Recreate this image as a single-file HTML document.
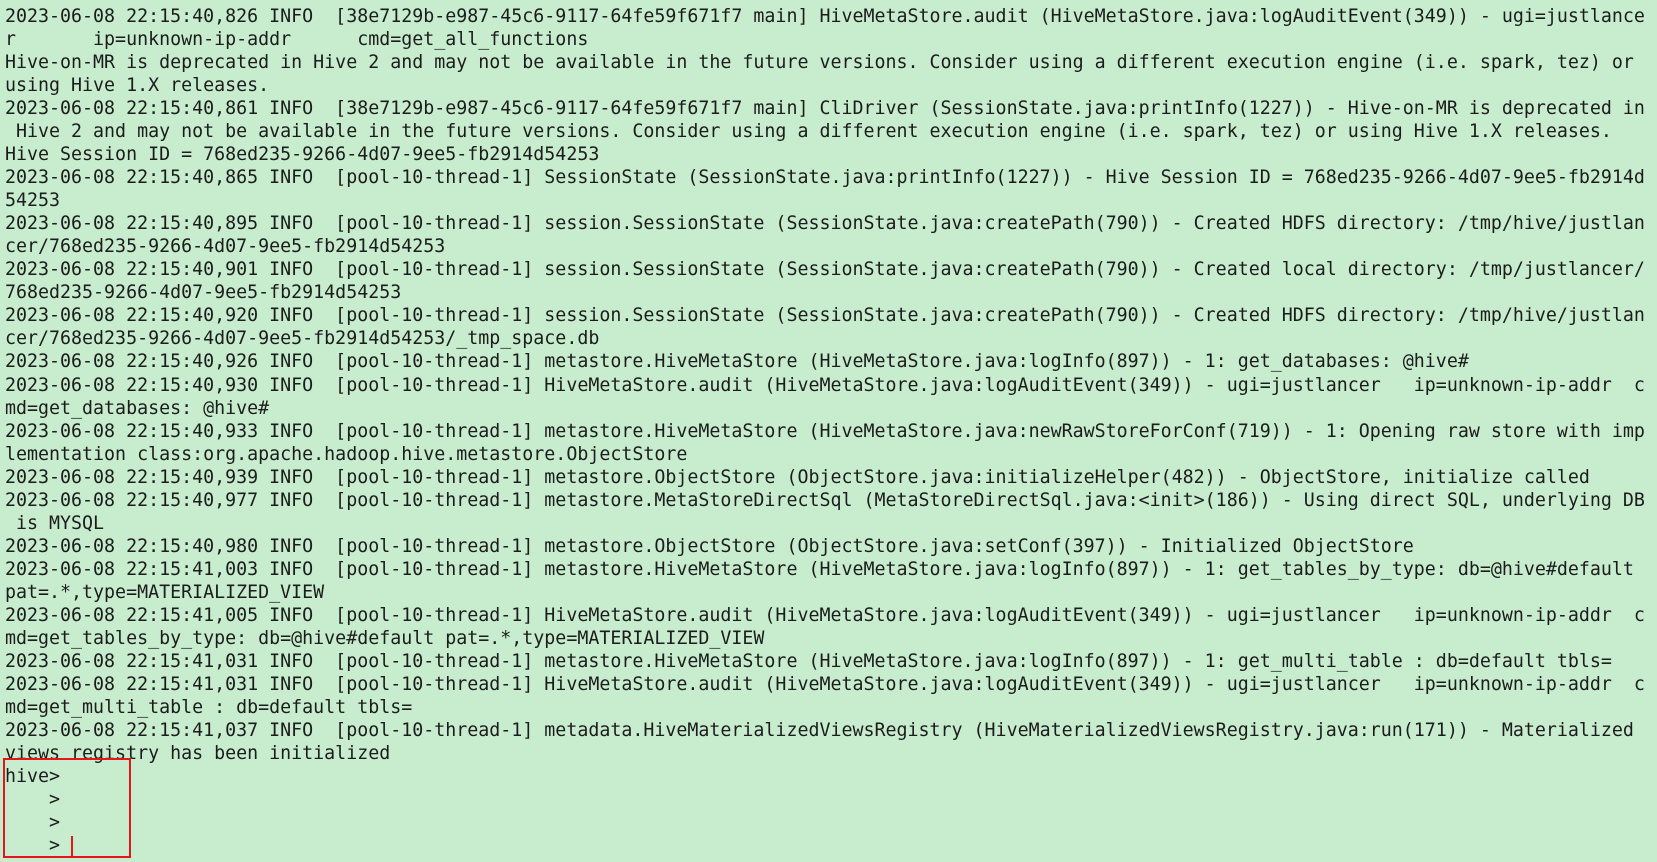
<!DOCTYPE html>
<html><head><meta charset="utf-8"><style>
html,body{margin:0;padding:0;background:#c7ecce;width:1657px;height:862px;overflow:hidden}
pre{margin:0;position:absolute;left:5px;top:5px;font-family:"DejaVu Sans Mono","Liberation Mono",monospace;font-size:18.3px;line-height:23.03px;color:#1c1c1c;white-space:pre}
.box{position:absolute;left:3px;top:758px;width:124px;height:96px;border:2px solid #e3161b}
.cur{position:absolute;left:71px;top:836px;width:2px;height:20px;background:#e3161b}
</style></head><body>
<pre>2023-06-08 22:15:40,826 INFO  [38e7129b-e987-45c6-9117-64fe59f671f7 main] HiveMetaStore.audit (HiveMetaStore.java:logAuditEvent(349)) - ugi=justlance
r       ip=unknown-ip-addr      cmd=get_all_functions
Hive-on-MR is deprecated in Hive 2 and may not be available in the future versions. Consider using a different execution engine (i.e. spark, tez) or
using Hive 1.X releases.
2023-06-08 22:15:40,861 INFO  [38e7129b-e987-45c6-9117-64fe59f671f7 main] CliDriver (SessionState.java:printInfo(1227)) - Hive-on-MR is deprecated in
 Hive 2 and may not be available in the future versions. Consider using a different execution engine (i.e. spark, tez) or using Hive 1.X releases.
Hive Session ID = 768ed235-9266-4d07-9ee5-fb2914d54253
2023-06-08 22:15:40,865 INFO  [pool-10-thread-1] SessionState (SessionState.java:printInfo(1227)) - Hive Session ID = 768ed235-9266-4d07-9ee5-fb2914d
54253
2023-06-08 22:15:40,895 INFO  [pool-10-thread-1] session.SessionState (SessionState.java:createPath(790)) - Created HDFS directory: /tmp/hive/justlan
cer/768ed235-9266-4d07-9ee5-fb2914d54253
2023-06-08 22:15:40,901 INFO  [pool-10-thread-1] session.SessionState (SessionState.java:createPath(790)) - Created local directory: /tmp/justlancer/
768ed235-9266-4d07-9ee5-fb2914d54253
2023-06-08 22:15:40,920 INFO  [pool-10-thread-1] session.SessionState (SessionState.java:createPath(790)) - Created HDFS directory: /tmp/hive/justlan
cer/768ed235-9266-4d07-9ee5-fb2914d54253/_tmp_space.db
2023-06-08 22:15:40,926 INFO  [pool-10-thread-1] metastore.HiveMetaStore (HiveMetaStore.java:logInfo(897)) - 1: get_databases: @hive#
2023-06-08 22:15:40,930 INFO  [pool-10-thread-1] HiveMetaStore.audit (HiveMetaStore.java:logAuditEvent(349)) - ugi=justlancer   ip=unknown-ip-addr  c
md=get_databases: @hive#
2023-06-08 22:15:40,933 INFO  [pool-10-thread-1] metastore.HiveMetaStore (HiveMetaStore.java:newRawStoreForConf(719)) - 1: Opening raw store with imp
lementation class:org.apache.hadoop.hive.metastore.ObjectStore
2023-06-08 22:15:40,939 INFO  [pool-10-thread-1] metastore.ObjectStore (ObjectStore.java:initializeHelper(482)) - ObjectStore, initialize called
2023-06-08 22:15:40,977 INFO  [pool-10-thread-1] metastore.MetaStoreDirectSql (MetaStoreDirectSql.java:&lt;init&gt;(186)) - Using direct SQL, underlying DB
 is MYSQL
2023-06-08 22:15:40,980 INFO  [pool-10-thread-1] metastore.ObjectStore (ObjectStore.java:setConf(397)) - Initialized ObjectStore
2023-06-08 22:15:41,003 INFO  [pool-10-thread-1] metastore.HiveMetaStore (HiveMetaStore.java:logInfo(897)) - 1: get_tables_by_type: db=@hive#default
pat=.*,type=MATERIALIZED_VIEW
2023-06-08 22:15:41,005 INFO  [pool-10-thread-1] HiveMetaStore.audit (HiveMetaStore.java:logAuditEvent(349)) - ugi=justlancer   ip=unknown-ip-addr  c
md=get_tables_by_type: db=@hive#default pat=.*,type=MATERIALIZED_VIEW
2023-06-08 22:15:41,031 INFO  [pool-10-thread-1] metastore.HiveMetaStore (HiveMetaStore.java:logInfo(897)) - 1: get_multi_table : db=default tbls=
2023-06-08 22:15:41,031 INFO  [pool-10-thread-1] HiveMetaStore.audit (HiveMetaStore.java:logAuditEvent(349)) - ugi=justlancer   ip=unknown-ip-addr  c
md=get_multi_table : db=default tbls=
2023-06-08 22:15:41,037 INFO  [pool-10-thread-1] metadata.HiveMaterializedViewsRegistry (HiveMaterializedViewsRegistry.java:run(171)) - Materialized
views registry has been initialized
hive&gt;
    &gt;
    &gt;
    &gt;</pre>
<div class="box"></div>
<div class="cur"></div>
</body></html>
